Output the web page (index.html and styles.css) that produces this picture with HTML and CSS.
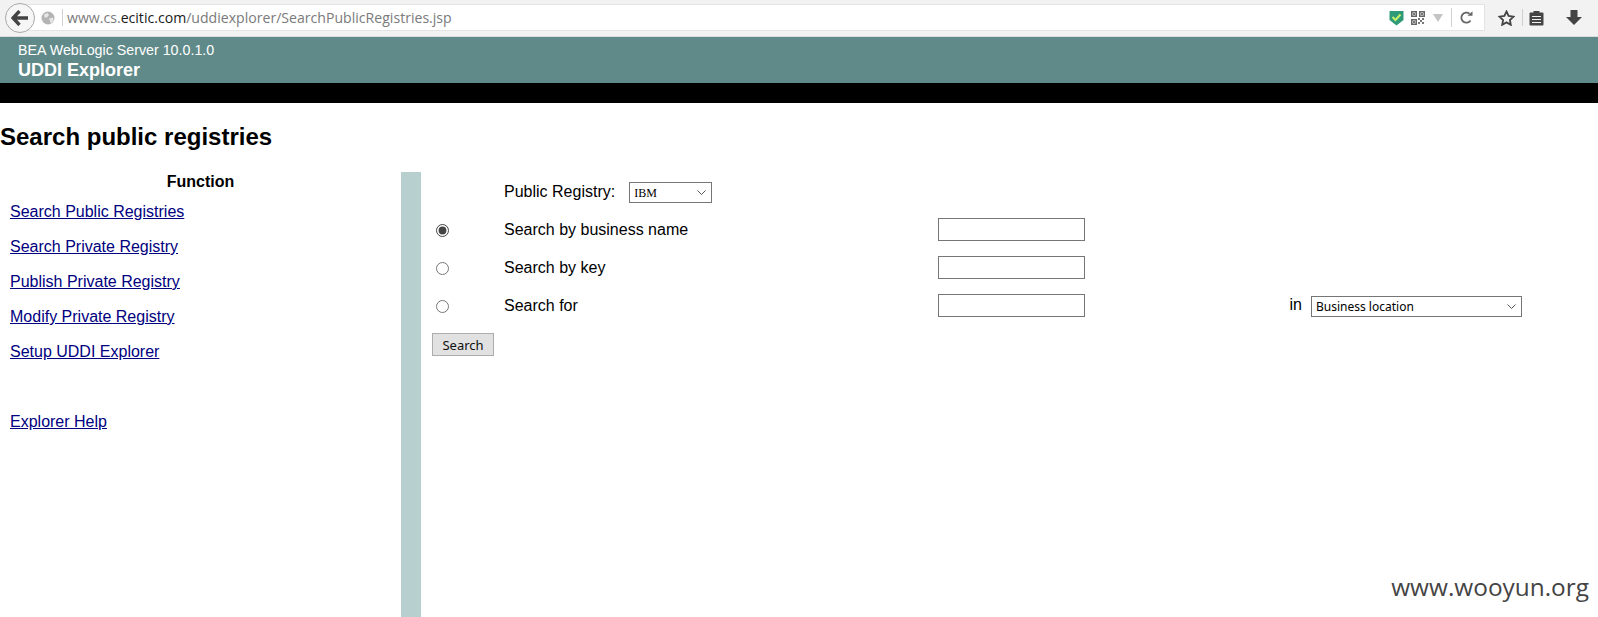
FILE: index.html
```html
<!DOCTYPE html>
<html lang="en">
<head>
<meta charset="utf-8">
<title>UDDI Explorer</title>
<link rel="stylesheet" href="styles.css">
</head>
<body>
<div class="browser">
  <button class="back" aria-label="Back">
    <svg width="18" height="16" viewBox="0 0 18 16"><path d="M8.500 1 2 8l6.500 7M2.500 8H17" fill="none" stroke="#444" stroke-width="3.400"/></svg>
  </button>
  <div class="urlbar">
    <svg class="globe" width="14" height="14" viewBox="0 0 14 14"><circle cx="7" cy="7" r="6.500" fill="#b4b4b4"/><path d="M3 3.500 6.500 2l1.500 2-2 2.500H3.500zM8 7.500l4-1 .5 3-2.500 3L9 10z" fill="#e6e6e6"/></svg>
    <span class="sep sep-url"></span>
    <span class="url">www.cs.<b>ecitic.com</b>/uddiexplorer/SearchPublicRegistries.jsp</span>
    <svg class="shield" width="15" height="16" viewBox="0 0 15 16"><path d="M0.500 1h14v9l-7 5.500-7-5.500z" fill="#2f9a78"/><path d="M3.500 7l3 3 5-5.500" fill="none" stroke="#c9f06a" stroke-width="2"/></svg>
    <svg class="qr" width="14" height="14" viewBox="0 0 14 14"><path d="M.75.75h4.500v4.500H.750zM8.750.75h4.500v4.500h-4.500zM.75 8.750h4.500v4.500H.750z" fill="none" stroke="#666" stroke-width="1.500"/><path d="M7 7h2v2H7zM11 7h2v2h-2zM9 9h2v2H9zM7 11h2v2H7zM11 11h2v2h-2zM2 2h2v2H2zM10 2h2v2h-2zM2 10h2v2H2z" fill="#777"/></svg>
    <svg class="drop" width="10" height="8" viewBox="0 0 10 8"><path d="M0 0h10L5 8z" fill="#c4c4c4"/></svg>
    <span class="sep sep-reload"></span>
    <svg class="reload" width="13" height="13" viewBox="0 0 13 13"><path d="M10.500 9.500A5 5 0 1 1 9.500 2.800" fill="none" stroke="#666" stroke-width="1.800"/><path d="M7.500 4.800h5v-4.500z" fill="#666"/></svg>
  </div>
  <div class="tools">
    <svg class="star" width="17" height="16" viewBox="0 0 17 16"><path d="M8.500 1.500l2.100 4.500 4.900.6-3.600 3.400.9 4.800-4.300-2.400-4.300 2.400.9-4.800-3.600-3.400 4.900-.6z" fill="none" stroke="#444" stroke-width="1.800"/></svg>
    <span class="sep sep-tools"></span>
    <svg class="clip" width="15" height="16" viewBox="0 0 15 16"><path d="M1.500 2.500h3V1h6v1.500h3a1 1 0 0 1 1 1v11a1 1 0 0 1-1 1h-12a1 1 0 0 1-1-1v-11a1 1 0 0 1 1-1z" fill="#444"/><path d="M3 6h9v1H3zM3 9h9v1H3zM3 12h9v1H3z" fill="#f1f1f1"/></svg>
    <svg class="down" width="16" height="15" viewBox="0 0 16 15"><path d="M4.500 0h7v7H16l-8 8-8-8h4.500z" fill="#444"/></svg>
  </div>
</div>

<header class="banner">
  <div class="product">BEA WebLogic Server 10.0.1.0</div>
  <div class="app">UDDI Explorer</div>
</header>
<div class="blackbar"></div>

<h1 class="title">Search public registries</h1>

<div class="layout">
  <nav class="side">
    <div class="side-head">Function</div>
    <a href="#">Search Public Registries</a>
    <a href="#">Search Private Registry</a>
    <a href="#">Publish Private Registry</a>
    <a href="#">Modify Private Registry</a>
    <a href="#">Setup UDDI Explorer</a>
    <a href="#" class="help">Explorer Help</a>
  </nav>
  <div class="strip"></div>
  <form class="form">
    <div class="row">
      <span></span>
      <label class="reg">Public Registry:
        <select class="sel sel-reg"><option>IBM</option></select>
      </label>
    </div>
    <div class="row">
      <input type="radio" name="by" checked>
      <span class="lbl">Search by business name</span>
      <input type="text" class="txt">
    </div>
    <div class="row">
      <input type="radio" name="by">
      <span class="lbl">Search by key</span>
      <input type="text" class="txt">
    </div>
    <div class="row">
      <input type="radio" name="by">
      <span class="lbl">Search for</span>
      <input type="text" class="txt">
      <span class="in">in</span>
      <select class="sel sel-loc"><option>Business location</option></select>
    </div>
    <button type="button" class="go">Search</button>
  </form>
</div>

<div class="mark">www.wooyun.org</div>
</body>
</html>
```
FILE: styles.css
```css
* { box-sizing: border-box; }
html, body { height: 100%; }
body {
  margin: 0;
  background: #fff;
  color: #000;
  font-family: "Liberation Sans", Arial, sans-serif;
  font-size: 16px;
  overflow: hidden;
  display: flex;
  flex-direction: column;
  position: relative;
}

/* browser chrome */
.browser {
  height: 37px;
  flex: none;
  display: flex;
  align-items: center;
  background: #f2f2f2;
  border-bottom: 1px solid #dcdcdc;
  padding: 0 0 1px 5px;
}
.back {
  width: 30px;
  height: 30px;
  border-radius: 50%;
  border: 1px solid #a8a8a8;
  background: #f6f6f6;
  padding: 0;
  display: flex;
  align-items: center;
  justify-content: center;
  position: relative;
  z-index: 1;
  flex: none;
}
.urlbar {
  width: 1465px;
  margin-left: -15px;
  height: 27px;
  background: #fff;
  border: 1px solid #e4e4e4;
  display: flex;
  align-items: center;
  padding-left: 20px;
  flex: none;
}
.globe { flex: none; }
.sep { width: 1px; background: #d0d0d0; flex: none; }
.sep-url { height: 17px; margin-left: 7px; }
.sep-reload { height: 19px; margin-left: 8px; }
.sep-tools { height: 17px; margin: 0 6px 0 7px; }
.url {
  font-family: "Open Sans", sans-serif;
  font-size: 14.100px;
  color: #7a7a7a;
  margin-left: 4px;
  white-space: nowrap;
  flex: 1;
}
.url b { font-weight: 400; color: #1a1a1a; }
.qr { margin-left: 7px; }
.drop { margin-left: 8px; }
.reload { margin-left: 8px; margin-right: 11px; }
.tools {
  display: flex;
  align-items: center;
  margin-left: 13px;
}
.down { margin-left: 22px; }

/* page banner */
.banner {
  height: 46px;
  flex: none;
  background: #5f8a89;
  color: #fff;
  padding: 5px 0 0 18px;
}
.product { font-size: 14.250px; line-height: 17px; }
.app { font-size: 18px; font-weight: 700; line-height: 22px; }
.blackbar { height: 20px; flex: none; background: #000; }

.title {
  margin: 20px 0 0;
  font-size: 24px;
  line-height: 28px;
  font-weight: 700;
  flex: none;
}

.layout {
  margin-top: 21px;
  flex: 1;
  display: flex;
  min-height: 0;
}
.side { width: 401px; flex: none; padding-top: 1px; }
.side-head {
  text-align: center;
  font-weight: 700;
  line-height: 18px;
  margin-bottom: 12px;
}
.side a {
  display: block;
  width: max-content;
  margin: 0 0 17px 10px;
  line-height: 18px;
  color: #000080;
}
.side a.help { margin-top: 52px; }
.strip { width: 20px; flex: none; background: #b7cfcf; }

.form { flex: 1; padding: 1px 0 0 11px; }
.row {
  display: grid;
  grid-template-columns: 72px 434px 147px 226px 211px;
  align-items: center;
  height: 38px;
}
.row:first-child { height: 37px; }
.row input[type="radio"] { margin: 3px 0 0 4px; width: 13px; height: 13px; accent-color: #444; }
.lbl { padding-top: 2px; }
.reg { grid-column: 2 / 4; display: flex; align-items: center; gap: 14px; }
.txt {
  width: 147px;
  height: 23px;
  border: 1px solid #767676;
  border-radius: 0;
  background: #fff;
  padding: 0;
}
.in { justify-self: end; margin-right: 9px; }
.sel {
  appearance: none;
  border: 1px solid #767676;
  border-radius: 0;
  padding: 0 0 0 4px;
  background-color: #fff;
  background-image: url("data:image/svg+xml,%3Csvg xmlns='http://www.w3.org/2000/svg' width='9' height='5'%3E%3Cpath d='M.5.5 4.500 4.500 8.500.5' fill='none' stroke='%23555'/%3E%3C/svg%3E");
  background-repeat: no-repeat;
  background-position: right 5px center;
  color: #000;
}
.sel-reg { width: 83px; height: 21px; font: 12px "Liberation Serif", serif; margin-top: 2px; }
.sel-loc { width: 211px; height: 21px; font: 12px "Noto Sans", sans-serif; margin-top: 2px; }
.go {
  display: block;
  margin-top: 9px;
  width: 62px;
  height: 23px;
  padding: 0;
  border: 1px solid #adadad;
  border-radius: 0;
  background: #e1e1e1;
  color: #111;
  font: 13px "Noto Sans", sans-serif;
}

.mark {
  position: absolute;
  right: 9px;
  bottom: 15px;
  font-family: "Open Sans", sans-serif;
  font-size: 24.400px;
  line-height: 30px;
  color: #444;
}
```
